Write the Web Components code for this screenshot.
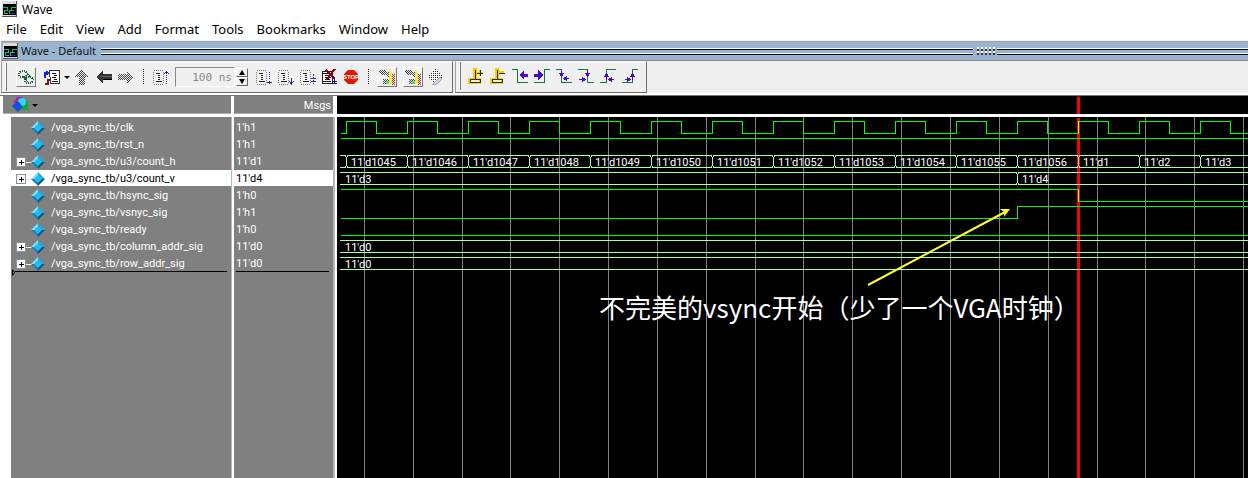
<!DOCTYPE html>
<html lang="zh-CN">
<head>
<meta charset="utf-8">
<title>Wave</title>
<style>
body{margin:0;font-family:"Noto Sans","Noto Sans CJK SC",sans-serif;background:#f0f0f0}
</style>
</head>
<body>
<wave-app></wave-app>
<script>
const define=(name,html,init)=>customElements.define(name,class extends HTMLElement{
  connectedCallback(){
    if(this.shadowRoot)return;
    const t=document.createElement('template');
    t.innerHTML=typeof html==='function'?html(this):html;
    this.attachShadow({mode:'open'}).append(t.content.cloneNode(true));
    if(init)init(this,this.shadowRoot);
  }
});

const step='<rect x="1.5" y="1.5" width="10" height="14" rx="2" stroke="#777" stroke-dasharray="1 1"/><path d="M4 4.500h3M4 12.500h6" stroke="#222"/><path d="M6.500 4v8" stroke="#222" stroke-width="2" stroke-dasharray="1 1"/>';
const busy='<g stroke="none"><path d="M0 1h6l5 3v4h-3l-2-2h-3l-3-3z" fill="url(#d)"/><path d="M10 1l3 3v11h-3z" fill="#f2ea54"/><path d="M13 5h3v11h-3z" fill="url(#r)"/><path d="M4 10h6v5h-6z" fill="url(#d)"/><path d="M7 12h3v3h-3z" fill="#54e064"/></g>';
const tri=(x,y,dir)=>{
  const p={l:`M${x} ${y}l4-3v6z`,r:`M${x} ${y}l-4-3v6z`,u:`M${x} ${y}l3 4h-6z`,d:`M${x} ${y}l3-4h-6z`}[dir];
  return `<path d="${p}" fill="#4808d0" stroke="none"/>`;
};
const ICONS={
  wave:'<rect x="0" y="0" width="15" height="16" fill="#ddd" stroke="none"/><rect x="1" y="3" width="13" height="11" fill="#000" stroke="none"/><path d="M1 6.500h4.500v3h-3v3h3M7.500 12.500v-3h2v-3h4.500" stroke="#16b874"/><path d="M8 9.500h4" stroke="#16b874"/><path d="M8 12.500h5" stroke="#3020d0"/><path d="M14.500 0v15.500H0" stroke="#555"/>',
  link:'<g stroke="#16612f" stroke-width="2" stroke-dasharray="1 1"><rect x="1" y="2" width="8" height="6" rx="3"/><rect x="7" y="8" width="8" height="6" rx="3"/><path d="M5 8l5 4M10 5l2 4"/></g>',
  doc:'<path d="M5.500 1.500h10v13h-9z" fill="#fff" stroke="#333"/><path d="M8 4.500h4M10 6.500h3M8 8.500h4M10 10.500h3M8 12.500h6" stroke="#111"/><path d="M1 9V4h4M3 2v4" stroke="#1020f0" stroke-width="2"/><path d="M1 15h3v-4h2" stroke="#801010" stroke-width="2"/>',
  up:'<path d="M8 0l7 8h-4v8H5V8H1z" fill="url(#d)" stroke="none"/>',
  left:'<path d="M0 8l7-6v3h9v6H7v3z" fill="#333" stroke="none"/><path d="M4 7.500h12" stroke="#666"/><path d="M7 10.500h9" stroke="#000"/>',
  right:'<path d="M16 8l-7-6v3H0v6h9v3z" fill="url(#d)" stroke="none"/>',
  restart:step+'<path d="M14.500 15V2" stroke="#2a2a90" stroke-dasharray="1 1"/><path d="M12 4.500h1M13 3.500h3M16 4.500h1" stroke="#2a2a90"/>',
  run1:step+'<path d="M14.500 3v8" stroke="#2a2a90" stroke-dasharray="1 1"/><path d="M12 13.500h5M14.500 12v3" stroke="#2a2a90"/>',
  run2:step+'<path d="M14.500 9v6M12 12l2.500 3 2-3" stroke="#2a2a90"/>',
  run3:step+'<path d="M14.500 5v10M12 9.500h5M12 12.500h5" stroke="#2a2a90" stroke-dasharray="2 1"/>',
  brk:'<rect x="1" y="2" width="10" height="12" fill="#fff" stroke="#222"/><path d="M2 4.500h6M4 6.500h6M4 8.500h6M4 10.500h5M2 12.500h8" stroke="#111"/><path d="M5 1l9 9M14 0L5 11" stroke="#8a0010" stroke-width="2"/><path d="M13.500 9v6M11 14.500h5M11 12.500h5" stroke="#1a1a90"/>',
  busy,
  wand:'<path d="M8 0l8 8-8 7-7-7z" fill="url(#w)" stroke="none"/><path d="M6 15l7-7 2 2-5 5z" fill="#c5d4e8" stroke="#aab" stroke-width="1"/>',
  addc:'<path d="M6 11V1h2v10M1 11h11v4H1zM9 5h6M12 2v6" stroke="#f5cf00" stroke-width="2"/><path d="M7.500 2v9M2.500 14.500v-3h10v3zM9 5.500h6M12.500 2v6" stroke="#332a00"/>',
  delc:'<path d="M6 11V1h2v10M1 11h11v4H1zM8 4h6" stroke="#f5cf00" stroke-width="2"/><path d="M7.500 2v9M2.500 14.500v-3h10v3zM9 5.500h6" stroke="#332a00"/>',
  prev:'<path d="M0 1.500h5.500v13H16" stroke="#0b8030"/><path d="M9 7h7" stroke="#4808d0" stroke-width="3"/><path d="M7 7l5-5v10z" fill="#4808d0" stroke="none"/>',
  next:'<path d="M0 14.500h10.500v-13H16" stroke="#0b8030"/><path d="M0 7h6" stroke="#4808d0" stroke-width="3"/><path d="M9 7L4 2v10z" fill="#4808d0" stroke="none"/>',
  pfall:'<path d="M0 1.500h5.500v13H16" stroke="#0b8030"/><path d="M5.500 2v6M9 10.500h4" stroke="#4808d0"/>'+tri(5.5,9,'d')+tri(7,10.500,'l'),
  nfall:'<path d="M0 1.500h9.500v13H16" stroke="#0b8030"/><path d="M9.500 2v6M1 11.500h6" stroke="#4808d0"/>'+tri(9.5,9,'d')+tri(8,11.500,'r'),
  prise:'<path d="M0 14.500h6.500v-13H16" stroke="#0b8030"/><path d="M6.500 7v5M10 11.500h4" stroke="#4808d0"/>'+tri(6.5,5,'u')+tri(8,11.500,'l'),
  nrise:'<path d="M0 14.500h10.500v-13H16" stroke="#0b8030"/><path d="M10.500 7v5M3 11.500h4" stroke="#4808d0"/>'+tri(10.5,5,'u')+tri(9,11.500,'r'),
  gem:'<g stroke="none" shape-rendering="auto"><path d="M8 1L1 8h7z" fill="#8fdcf5"/><path d="M8 1l7 7H8z" fill="#2aa5d8"/><path d="M1 8l7 7V8z" fill="#1580b8"/><path d="M15 8l-7 7V8z" fill="#0b5578"/><path d="M8 4l4 4-4 4-4-4z" fill="#18c0f6"/></g>',
  shapes:'<g stroke="none" shape-rendering="auto"><path d="M5 0h6l-4 6H1z" fill="#b020c0"/><path d="M9 4h7v9H8z" fill="#17a53c"/><circle cx="10" cy="5" r="4" fill="#28d8f4"/><path d="M6 4l5 6-5 5-6-6z" fill="#1450d8"/></g>',
  plus:'<rect x="3.500" y="3.500" width="9" height="9" rx="1" fill="#fff" stroke="#8a8fa8"/><path d="M6 8.500h5M8.500 6v5" stroke="#000"/>'
};
define('wave-icon',el=>`<style>
  :host{display:block;width:16px;height:16px;flex:none}
  svg{display:block;overflow:visible}
  </style><svg width="16" height="16" viewBox="0 0 16 16" fill="none" shape-rendering="crispEdges" aria-hidden="true">
  <defs><pattern id="d" width="2" height="2" patternUnits="userSpaceOnUse"><path d="M0 0h1v1H0zM1 1h1v1H1z" fill="#444" stroke="none"/></pattern>
  <pattern id="w" width="2" height="2" patternUnits="userSpaceOnUse"><path d="M0 0h2v2H0z" fill="#fff" stroke="none"/><path d="M0 0h1v1H0z" fill="#222" stroke="none"/></pattern>
  <pattern id="r" width="2" height="2" patternUnits="userSpaceOnUse"><path d="M0 0h1v1H0zM1 1h1v1H1z" fill="#d01020" stroke="none"/></pattern></defs>
  ${ICONS[el.getAttribute('name')]}</svg>`);

define('stop-icon',`<style>
  :host{display:block;width:14px;height:14px;flex:none}
  svg{display:block}text{font:bold 6px "Liberation Sans",sans-serif}
  </style><svg width="14" height="14" viewBox="0 0 14 14"><path d="M4 0h6l4 4v6l-4 4H4l-4-4V4z" fill="#e01800"/><text x="7" y="9" text-anchor="middle" fill="#fff">STOP</text></svg>`);

define('tool-button',el=>`<style>
  :host{display:block;flex:none;width:22px}
  button{display:flex;align-items:center;justify-content:center;box-sizing:border-box;width:100%;height:22px;margin:0;padding:0;border:0;background:none}
  :host([raised]) button{width:20px;height:20px;margin:1px;border:1px solid;border-color:#fff #777 #777 #fff}
  :host([wide]){width:28px}
  :host([wide]) button{gap:4px}
  .caret{border:3px solid transparent;border-top-color:#000;border-bottom:0}
  </style><button type="button" aria-label="${el.getAttribute('label')}"><slot></slot>${el.hasAttribute('wide')?'<span class="caret"></span>':''}</button>`);

define('tool-group',`<style>
  :host{display:flex;align-items:center;box-sizing:border-box;height:32px;border:1px solid;border-color:#fff #6c6c6c #6c6c6c #a0a0a0}
  .grip{flex:none;width:2px;height:28px;margin-left:3px;box-sizing:border-box;border-left:1px solid #fff;border-right:1px solid #777}
  </style><span class="grip"></span><slot></slot>`);

define('tool-divider',`<style>
  :host{display:block;flex:none;width:2px;height:16px}
  i{display:block;width:1px;height:16px;background:repeating-linear-gradient(#222 0 1px,transparent 1px 2px)}
  </style><i></i>`);

define('run-length',`<style>
  :host{display:flex;flex:none;height:22px;align-items:center}
  input{box-sizing:border-box;width:60px;height:20px;margin:0;padding:0 2px;border:1px solid;border-color:#888 #fff #fff #888;border-radius:0;background:#f0f0f0;color:#8a8a8a;font:11px "DejaVu Sans Mono",monospace;text-align:right}
  div{display:flex;flex-direction:column;width:12px;margin-left:1px}
  button{display:flex;align-items:center;justify-content:center;height:9px;box-sizing:border-box;margin:0;padding:0;border:1px solid;border-color:#fff #666 #666 #fff;background:#f0f0f0}
  button::before{content:"";border:3px solid transparent;border-bottom:5px solid #000;border-top:0}
  .down::before{border-top:5px solid #000;border-bottom:0}
  </style><input aria-label="Run length" value="100 ns" readonly><div><button type="button" aria-label="Increase"></button><button type="button" class="down" aria-label="Decrease"></button></div>`);

define('wave-toolbar',`<style>
  :host{display:flex;gap:2px;padding:0 1px;background:#f0f0f0;border-bottom:2px solid #fff}
  tool-group.main{width:452px}
  tool-group.cursors{width:192px;padding-bottom:3px}
  .a{margin-left:8px}.b{margin-left:4px}.f{margin-left:8px}.g{margin-left:6px}.h{margin-left:4px}
  </style>
  <tool-group class="main">
   <tool-button raised class="a" label="Link"><wave-icon name="link"></wave-icon></tool-button>
   <tool-button wide class="g" label="Context"><wave-icon name="doc"></wave-icon></tool-button>
   <tool-button label="Up"><wave-icon name="up"></wave-icon></tool-button>
   <tool-button label="Back"><wave-icon name="left"></wave-icon></tool-button>
   <tool-button label="Forward"><wave-icon name="right"></wave-icon></tool-button>
   <tool-divider class="g"></tool-divider>
   <tool-button class="h" label="Restart"><wave-icon name="restart"></wave-icon></tool-button>
   <run-length class="b"></run-length>
   <tool-button class="b" label="Run"><wave-icon name="run1"></wave-icon></tool-button>
   <tool-button label="Continue run"><wave-icon name="run2"></wave-icon></tool-button>
   <tool-button label="Run all"><wave-icon name="run3"></wave-icon></tool-button>
   <tool-button label="Break"><wave-icon name="brk"></wave-icon></tool-button>
   <tool-button label="Stop"><stop-icon></stop-icon></tool-button>
   <tool-divider class="g"></tool-divider>
   <tool-button raised class="g" label="Performance profiling"><wave-icon name="busy"></wave-icon></tool-button>
   <tool-button raised class="b" label="Memory profiling"><wave-icon name="busy"></wave-icon></tool-button>
   <tool-button label="Edit"><wave-icon name="wand"></wave-icon></tool-button>
  </tool-group>
  <tool-group class="cursors">
   <tool-button class="b" label="Insert cursor"><wave-icon name="addc"></wave-icon></tool-button>
   <tool-button label="Delete cursor"><wave-icon name="delc"></wave-icon></tool-button>
   <tool-button label="Previous transition"><wave-icon name="prev"></wave-icon></tool-button>
   <tool-button label="Next transition"><wave-icon name="next"></wave-icon></tool-button>
   <tool-button label="Previous falling edge"><wave-icon name="pfall"></wave-icon></tool-button>
   <tool-button label="Next falling edge"><wave-icon name="nfall"></wave-icon></tool-button>
   <tool-button label="Previous rising edge"><wave-icon name="prise"></wave-icon></tool-button>
   <tool-button label="Next rising edge"><wave-icon name="nrise"></wave-icon></tool-button>
  </tool-group>`);

define('title-bar',`<style>
  :host{display:flex;align-items:center;gap:4px;height:18px;padding-left:2px;background:#fff;font-size:12px;color:#000}
  </style><wave-icon name="wave"></wave-icon><slot></slot>`);

define('menu-bar',`<style>
  :host{display:block;background:#fff;height:22px;border-bottom:1px solid #f0f0f0}
  nav{display:flex;gap:13px;padding-left:6px}
  button{margin:0;padding:0;border:0;background:none;font:13px/22px "Noto Sans",sans-serif;color:#000}
  </style><nav>${['File','Edit','View','Add','Format','Tools','Bookmarks','Window','Help'].map(m=>`<button type="button">${m}</button>`).join('')}</nav>`);

define('pane-header',`<style>
  :host{display:flex;align-items:center;height:18px;margin-left:1px;padding-left:2px;border-top:1px solid #a0a0a0;border-bottom:1px solid #888;background:#99b4d1;color:#111;font-size:11px;line-height:18px}
  wave-icon{margin-right:2px}
  .rails{flex:1;height:7px;margin-left:5px;background:linear-gradient(#e8ffff 0 1px,#000 1px 2px,#99b4d1 2px 5px,#e8ffff 5px 6px,#000 6px 7px)}
  .tail{flex:0 1 251px;margin-left:2px}
  .grip{width:20px;height:8px;margin-left:2px;background:conic-gradient(#fff 25%,#333 0 50%,#99b4d1 0) 0 0/4px 4px,conic-gradient(#fff 25%,#333 0 50%,#99b4d1 0) 2px 2px/4px 4px}
  </style><wave-icon name="wave"></wave-icon><slot></slot><span class="rails"></span><span class="grip"></span><span class="rails tail"></span>`);

const SIGNALS=[['clk',"1'h1"],['rst_n',"1'h1"],['u3/count_h',"11'd1",1],['u3/count_v',"11'd4",1,1],['hsync_sig',"1'h0"],['vsnyc_sig',"1'h1"],['ready',"1'h0"],['column_addr_sig',"11'd0",1],['row_addr_sig',"11'd0",1]];
define('signal-table',`<style>
  :host{display:block;flex:none;width:334px;margin-left:3px;background:linear-gradient(90deg,#fff 0 8px,#808080 8px 228px,#b8b8b8 228px 229px,#fff 229px 231px,#808080 231px 330px,#b8b8b8 330px 332px,#fff 332px);color:#fff;font:11px/17px Roboto,sans-serif}
  table{width:100%;border-spacing:0;table-layout:fixed}
  th,td{padding:0;font-weight:400;text-align:left;height:17px}
  thead th{height:18px;background:#808080;border-bottom:3px solid #fff;border-right:3px solid #fff;box-shadow:inset 0 -1px #b0b0b0}
  thead th.msgs{text-align:right;padding-right:2px;border-right-width:4px}
  .name{display:flex;align-items:center;height:17px;margin-left:8px;margin-right:3px}
  .slot{width:12px;height:16px;margin-left:2px;display:flex}
  .slot button{margin:0;padding:0;border:0;background:none;width:16px;height:16px}
  .gem{margin-left:5px}
  .slot i{flex:none;width:6px;height:1px;margin:8px 0 0 -3px;background:#eee}
  .label{margin-left:5px;white-space:nowrap}
  .val{margin-right:4px;padding-left:2px;height:17px}
  .sel .name,.sel .val{background:linear-gradient(#fff 16px,#808080 16px);color:#000}
  .head{display:flex;align-items:center;gap:4px;border:0;background:none;margin:0;padding:0 0 0 9px}
  .caret{border:3px solid transparent;border-top-color:#000;border-bottom:0}
  .pad td{height:2px}
  .mark td{height:6px;vertical-align:top}
  .line{height:1px;background:#000;margin:-1px 8px 0 2px}
  .end{display:flex;align-items:flex-start;margin-top:-3px}
  .end .line{flex:1;margin:2px 7px 0 0}
  .end svg{margin-left:9px}
  </style>
  <table><colgroup><col style="width:231px"><col></colgroup>
  <thead><tr><th><button type="button" class="head" aria-label="Objects"><wave-icon name="shapes"></wave-icon><span class="caret"></span></button></th><th class="msgs">Msgs</th></tr></thead>
  <tbody><tr class="pad"><td></td><td></td></tr>
  ${SIGNALS.map(([n,v,x,s])=>`<tr class="${s?'sel':''}"><td><div class="name"><span class="slot">${x?'<button type="button" aria-label="Expand"><wave-icon name="plus"></wave-icon></button><i></i>':''}</span><wave-icon class="gem" name="gem"></wave-icon><span class="label">/vga_sync_tb/${n}</span></div></td><td><div class="val">${v}</div></td></tr>`).join('')}
  <tr class="mark"><td><div class="end"><svg width="3" height="7" viewBox="0 0 3 7"><path d="M.5.5v6l2-3z" fill="none" stroke="#000"/></svg><div class="line"></div></div></td><td><div class="line"></div></td></tr></tbody></table>`);

define('wave-view',`<style>
  :host{display:flex;flex-direction:column;flex:1;min-width:0;background:#000}
  .time{height:18px;border-bottom:3px solid #fff;background:#000}
  .plot{flex:1;min-height:0;overflow:hidden}
  svg{display:block}
  .vals{font:11px Roboto,sans-serif;fill:#fff}
  .note{font:26px "Noto Sans CJK SC",sans-serif;fill:#fff}
  </style><div class="time"><svg width="100%" height="18"><rect x="740" y="1" width="3" height="17" fill="#f00"/></svg></div>
  <div class="plot"><svg class="canvas" width="100%" height="361" fill="none"></svg></div>`,(el,root)=>{
  // Plot coordinates start at the pane's left edge, below the time band.
  const END=4000,period=61,first=9;
  let s='';
  for(let k=0;k<80;k++)s+=`<rect x="${Math.round(27+48.84*k-.1)}" y="0" width="1" height="100%" fill="#808080"/>`;
  s+='<rect x="740" y="1" width="3" height="100%" fill="#f00"/>';
  let clk='M4 16.5';
  for(let x=first;x<END;x+=period)clk+=`H${x+.5}V4.5H${x+30.5}V16.5`;
  s+=`<g stroke="#0f0" shape-rendering="crispEdges"><path d="${clk}"/><path d="M4 21.500H${END}M4 72.500H741.500V84.500H${END}M4 101.500H680.500V89.500H${END}M4 118.500H${END}"/></g>`;
  s+='<path d="M741.500 16V4M741.500 73v11" stroke="#ff0" shape-rendering="crispEdges"/>';
  const bus=(y,edges)=>{
    let x0=3,p='';
    for(const x of edges){
      p+=`M${x0} ${y+.5}H${x-1}M${x0} ${y+12.5}H${x-1}M${x-.5} ${y}v2M${x-.5} ${y+13}v-2M${x+1.5} ${y}v2M${x+1.5} ${y+13}v-2M${x+.5} ${y+2}v9`;
      x0=x+1;
    }
    return p+`M${x0} ${y+.5}H${END}M${x0} ${y+12.5}H${END}`;
  };
  const edges=Array.from({length:15},(_,i)=>first+i*period);
  s+=`<path d="${bus(38,edges)}${bus(55,[680])}${bus(123,[])}${bus(140,[])}" stroke="#aaffaa" shape-rendering="crispEdges"/>`;
  s+='<g class="vals">';
  edges.forEach((x,i)=>s+=`<text x="${x+5}" y="49">11'd${i<12?1045+i:i-11}</text>`);
  s+=`<text x="8" y="66">11'd3</text><text x="685" y="66">11'd4</text><text x="8" y="134">11'd0</text><text x="8" y="151">11'd0</text></g>`;
  s+='<path d="M531 168L670 94" stroke="#ffff30" stroke-width="2"/><path d="M673 92l-10 0 4 3 0 5z" fill="#ffff30"/>';
  s+='<text class="note" x="262" y="201">不完美的vsync开始（少了一个VGA时钟）</text>';
  root.querySelector('.canvas').innerHTML=s;
});

define('wave-app',`<style>
  :host{display:flex;flex-direction:column;min-height:100vh}
  main{flex:1;display:flex;background:#fff;border-top:1px solid #777}
  </style><title-bar>Wave</title-bar><menu-bar></menu-bar><pane-header>Wave - Default</pane-header><wave-toolbar></wave-toolbar>
  <main><signal-table></signal-table><wave-view></wave-view></main>`);
</script>
</body>
</html>
